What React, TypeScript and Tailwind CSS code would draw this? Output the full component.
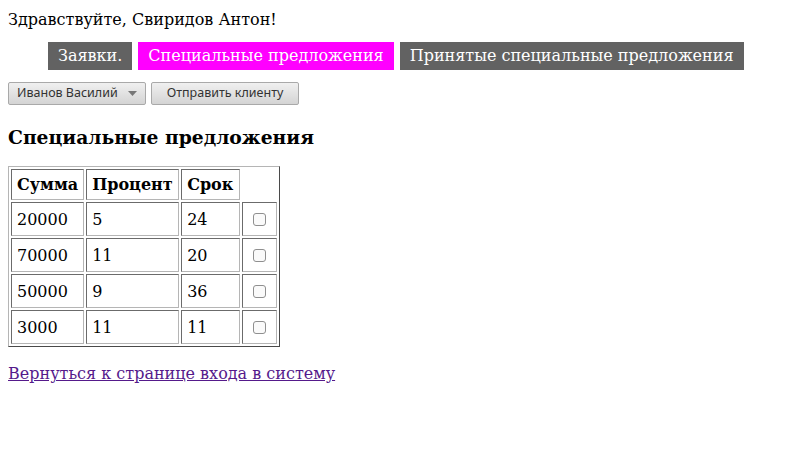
export default function App() {
  const rows = [
    { sum: '20000', pct: '5', term: '24' },
    { sum: '70000', pct: '11', term: '20' },
    { sum: '50000', pct: '9', term: '36' },
    { sum: '3000', pct: '11', term: '11' },
  ]
  const cell = 'border border-t-[#6b6b6b] border-l-[#6b6b6b] border-b-[#b5b5b5] border-r-[#b5b5b5] px-[5px] py-[5px] text-left'

  return (
    <div className="m-2 text-[16px] text-black" style={{ fontFamily: '"DejaVu Serif", serif' }}>
      <div className="leading-[24px]">Здравствуйте, Свиридов Антон!</div>

      <ul className="mt-[10px] flex gap-[6px] pl-10">
        <li className="bg-[#626262] px-[10px] text-[16px] leading-[28px] text-white">Заявки.</li>
        <li className="bg-[#ff00ff] px-[10px] text-[16px] leading-[28px] text-white">Специальные предложения</li>
        <li className="bg-[#626262] px-[10px] text-[16px] leading-[28px] text-white">Принятые специальные предложения</li>
      </ul>

      <div className="mt-[12px] flex gap-[5px]" style={{ fontFamily: '"Noto Sans", sans-serif' }}>
        <button className="flex h-[23px] items-center gap-[10px] rounded-[2px] border border-[#a9a9a9] bg-gradient-to-b from-[#f0f0f0] to-[#d4d4d4] px-[8px] text-[12.5px] text-[#333]">
          Иванов Василий
          <svg width="9" height="5" viewBox="0 0 9 5"><path d="M0 0h9L4.5 5z" fill="#777" /></svg>
        </button>
        <button className="flex h-[23px] items-center rounded-[2px] border border-[#a9a9a9] bg-gradient-to-b from-[#f0f0f0] to-[#d4d4d4] px-[15px] text-[12.5px] text-[#333]">
          Отправить клиенту
        </button>
      </div>

      <h3 className="mt-[21px] text-[18.72px] font-bold leading-[22px]">Специальные предложения</h3>

      <table className="mt-[18px] border-separate border-spacing-[2px] border border-t-[#b5b5b5] border-l-[#b5b5b5] border-b-[#4a4a4a] border-r-[#4a4a4a] leading-[19px]">
        <thead>
          <tr>
            <th className={cell + ' h-[31px] font-bold'}>Сумма</th>
            <th className={cell + ' font-bold'}>Процент</th>
            <th className={cell + ' font-bold'}>Срок</th>
            <th className="p-0"></th>
          </tr>
        </thead>
        <tbody>
          {rows.map((r, i) => (
            <tr key={i}>
              <td className={cell + ' h-[34px]'}>{r.sum}</td>
              <td className={cell + ' w-[93px]'}>{r.pct}</td>
              <td className={cell + ' w-[59px]'}>{r.term}</td>
              <td className={cell + ' w-[35px]'}>
                <div className="flex justify-center">
                  <span className="block h-[13px] w-[13px] rounded-[3px] border border-[#8f8f8f] bg-[#fafafa]" />
                </div>
              </td>
            </tr>
          ))}
        </tbody>
      </table>

      <a href="#" className="mt-[17px] inline-block leading-[19px] text-[#551a8b] underline">Вернуться к странице входа в систему</a>
    </div>
  )
}
